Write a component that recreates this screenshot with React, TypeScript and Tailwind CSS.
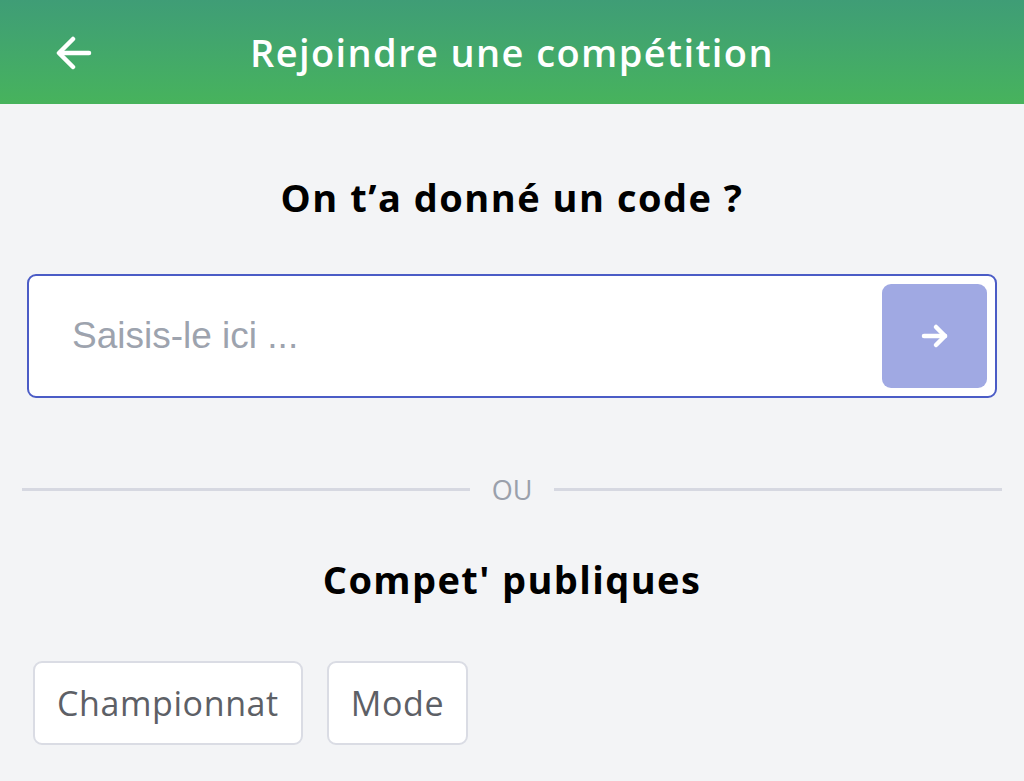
import React from "react";

export default function App() {
  return (
    <div className="w-[1024px] h-[781px] bg-[#f3f4f6] flex flex-col overflow-hidden" style={{ fontFamily: "'Open Sans', Lato, sans-serif" }}>
      <div className="h-[104px] bg-gradient-to-b from-[#3f9d76] to-[#47b35c] flex items-center relative shrink-0">
        <div className="absolute left-[56px] top-[36px]">
          <svg width="36" height="34" viewBox="0 0 36 34" fill="none" stroke="white" strokeWidth="4.5" strokeLinecap="round" strokeLinejoin="round">
            <path d="M33 17H4" />
            <path d="M17 3L3 17L17 31" />
          </svg>
        </div>
        <div className="w-full text-center text-white text-[38px] font-semibold leading-none tracking-[1.4px]">Rejoindre une compétition</div>
      </div>
      <div className="flex flex-col px-[22px]">
        <div className="text-center text-[38px] font-bold text-black mt-[71px] leading-[44px] tracking-[1.5px]">On t’a donné un code ?</div>
        <div className="mt-[55px] mx-[5px] h-[124px] bg-white border-2 border-[#4b5cc6] rounded-[9px] flex items-center pl-[43px] pr-[8px]">
          <div className="flex-1 text-[37px] text-[#9da3ae]" style={{ fontFamily: "'Liberation Sans', Arial, sans-serif" }}>Saisis-le ici ...</div>
          <div className="w-[105px] h-[104px] bg-[#a0a9e3] rounded-[9px] flex items-center justify-center">
            <svg width="28" height="26" viewBox="0 0 28 26" fill="none" stroke="white" strokeWidth="4.5" strokeLinecap="round" strokeLinejoin="round">
              <path d="M3 13H24" />
              <path d="M15 4L24 13L15 22" />
            </svg>
          </div>
        </div>
        <div className="mt-[78px] flex items-center gap-[22px]">
          <div className="flex-1 h-[3px] bg-[#d6d8e1]" />
          <div className="text-[27px] text-[#9aa0ab] leading-none">OU</div>
          <div className="flex-1 h-[3px] bg-[#d6d8e1]" />
        </div>
        <div className="text-center text-[38px] font-bold text-black mt-[54px] leading-[44px] tracking-[1.4px]">Compet' publiques</div>
        <div className="mt-[60px] flex gap-[24px] px-[11px]">
          <div className="h-[84px] px-[22px] bg-white border-2 border-[#dadce4] rounded-[9px] flex items-center text-[34px] text-[#5d6066] tracking-[0.6px]">Championnat</div>
          <div className="h-[84px] px-[22px] bg-white border-2 border-[#dadce4] rounded-[9px] flex items-center text-[34px] text-[#5d6066] tracking-[0.6px]">Mode</div>
        </div>
      </div>
    </div>
  );
}
